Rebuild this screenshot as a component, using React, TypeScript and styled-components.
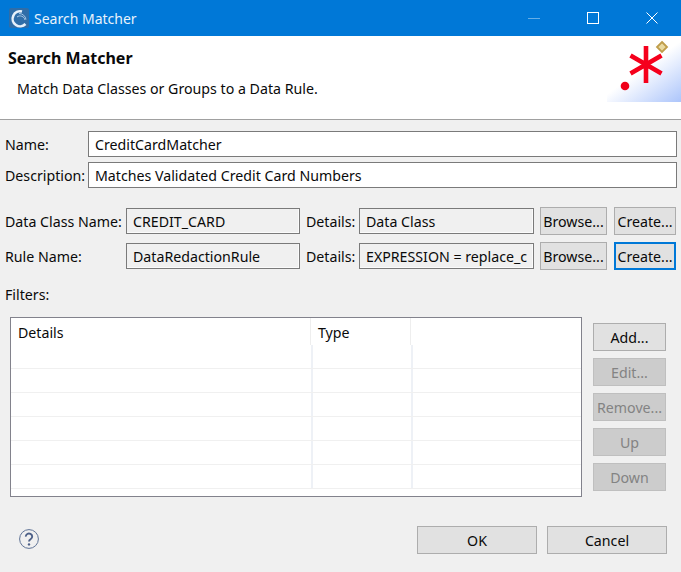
import styled, { createGlobalStyle } from "styled-components";

const GlobalStyle = createGlobalStyle`
  html, body {
    margin: 0;
    padding: 0;
    background: #f0f0f0;
  }
`;

const RULE_ROWS = [
  { label: "Data Class Name:", value: "CREDIT_CARD", details: "Data Class", focused: false },
  { label: "Rule Name:", value: "DataRedactionRule", details: "EXPRESSION = replace_c", focused: true },
];

const SIDE_BUTTONS = [
  { label: "Add...", disabled: false },
  { label: "Edit...", disabled: true },
  { label: "Remove...", disabled: true },
  { label: "Up", disabled: true },
  { label: "Down", disabled: true },
];

export default function App() {
  return (
    <Dialog>
      <GlobalStyle />
      <TitleBar>
        <AppIcon viewBox="0 0 20 20">
          <rect width="20" height="20" rx="2" fill="#2f6da8" />
          <path d="M13 3.5a7.5 7.5 0 1 0 3.5 12.5" fill="none" stroke="#e6f0fa" strokeWidth="2.6" />
          <path d="M8 9a5 5 0 0 1 8 3M10 5.5a7 7 0 0 1 7 6" fill="none" stroke="#a9c8e6" strokeWidth="1" />
        </AppIcon>
        <WindowTitle>Search Matcher</WindowTitle>
        <WindowControls>
          <WindowButton viewBox="0 0 12 12">
            <path d="M0 6.5H12" stroke="#66aee7" />
          </WindowButton>
          <WindowButton viewBox="0 0 12 12">
            <rect x="0.5" y="0.5" width="11" height="11" fill="none" stroke="#fff" />
          </WindowButton>
          <WindowButton viewBox="0 0 12 12">
            <path d="M0.5 0.5 11.5 11.5M11.5 0.5 0.5 11.5" stroke="#fff" />
          </WindowButton>
        </WindowControls>
      </TitleBar>

      <Banner>
        <BannerText>
          <BannerTitle>Search Matcher</BannerTitle>
          <BannerMessage>Match Data Classes or Groups to a Data Rule.</BannerMessage>
        </BannerText>
        <WizardImage viewBox="0 0 74 66">
          <defs>
            <linearGradient id="wizardFade" x1="0.35" y1="0.2" x2="1" y2="1">
              <stop offset="0.3" stopColor="#ffffff" />
              <stop offset="1" stopColor="#acc5fb" />
            </linearGradient>
          </defs>
          <rect width="74" height="66" fill="url(#wizardFade)" />
          <circle cx="18" cy="50" r="4.3" fill="#f00018" />
          <path d="M39 10v37M23.5 19.5l31 18M54.5 19.5l-31 18" stroke="#f5001c" strokeWidth="4.6" />
          <path d="M55 6 60 11 55 16 50 11Z" fill="#e9d9a0" stroke="#bf9d4a" strokeWidth="1.8" />
        </WizardImage>
      </Banner>

      <Body>
        <FieldRow>
          <FieldLabel>Name:</FieldLabel>
          <TextField>CreditCardMatcher</TextField>
        </FieldRow>
        <FieldRow>
          <FieldLabel>Description:</FieldLabel>
          <TextField>Matches Validated Credit Card Numbers</TextField>
        </FieldRow>

        <RuleGroup>
          {RULE_ROWS.map((row) => (
            <RuleRow key={row.label}>
              <RuleLabel>{row.label}</RuleLabel>
              <ReadOnlyField $width={174}>{row.value}</ReadOnlyField>
              <DetailsLabel>Details:</DetailsLabel>
              <ReadOnlyField $width={175}>{row.details}</ReadOnlyField>
              <BrowseButton>Browse...</BrowseButton>
              <CreateButton $focused={row.focused}>Create...</CreateButton>
            </RuleRow>
          ))}
        </RuleGroup>

        <FiltersLabel>Filters:</FiltersLabel>

        <FiltersArea>
          <FiltersTable>
            <HeaderRow>
              <HeaderCell $width={300}>Details</HeaderCell>
              <HeaderCell $width={100}>Type</HeaderCell>
              <HeaderCell $width={0} />
            </HeaderRow>
            <TableBody>
              {[0, 1, 2, 3, 4, 5].map((i) => (
                <TableRow key={i}>
                  <BodyCell $width={302} />
                  <BodyCell $width={100} />
                  <BodyCell $width={0} />
                </TableRow>
              ))}
            </TableBody>
          </FiltersTable>
          <SideButtons>
            {SIDE_BUTTONS.map((button) => (
              <PushButton key={button.label} $disabled={button.disabled}>
                {button.label}
              </PushButton>
            ))}
          </SideButtons>
        </FiltersArea>

        <Footer>
          <HelpIcon viewBox="0 0 20 20">
            <circle cx="10" cy="10" r="9.4" fill="none" stroke="#5f7396" strokeWidth="1" />
            <path d="M6.8 7.6a3.2 3 0 1 1 5 2.4c-1.2.8-1.8 1.3-1.8 2.6" fill="none" stroke="#4d6088" strokeWidth="1.9" />
            <circle cx="10" cy="15.4" r="1.2" fill="#4d6088" />
          </HelpIcon>
          <FooterButtons>
            <DialogButton>OK</DialogButton>
            <DialogButton>Cancel</DialogButton>
          </FooterButtons>
        </Footer>
      </Body>
    </Dialog>
  );
}

const Dialog = styled.div`
  display: flex;
  flex-direction: column;
  width: 681px;
  height: 572px;
  overflow: hidden;
  background: #f0f0f0;
  color: #0a0a0a;
  font-family: "Noto Sans", "Open Sans", sans-serif;
  font-size: 14.2px;
`;

const TitleBar = styled.div`
  display: flex;
  align-items: center;
  flex: none;
  height: 36px;
  padding-left: 9px;
  background: #0078d7;
`;

const AppIcon = styled.svg`
  width: 20px;
  height: 20px;
`;

const WindowTitle = styled.div`
  margin-left: 5px;
  color: #e8f2fb;
  font-size: 14px;
`;

const WindowControls = styled.div`
  display: flex;
  gap: 47px;
  margin-left: auto;
  margin-right: 23px;
`;

const WindowButton = styled.svg`
  width: 12px;
  height: 12px;
`;

const Banner = styled.div`
  display: flex;
  justify-content: space-between;
  align-items: flex-start;
  flex: none;
  height: 83px;
  background: #fff;
  border-bottom: 1px solid #a0a0a0;
`;

const BannerText = styled.div`
  padding: 10px 0 0 8px;
`;

const BannerTitle = styled.div`
  font-weight: 700;
  font-size: 16px;
  line-height: 24px;
`;

const BannerMessage = styled.div`
  margin: 6px 0 0 9px;
  line-height: 25px;
`;

const WizardImage = styled.svg`
  width: 74px;
  height: 66px;
`;

const Body = styled.div`
  display: flex;
  flex-direction: column;
  flex: 1;
  padding: 11px 4px 18px 5px;
`;

const FieldRow = styled.div`
  display: flex;
  align-items: center;
  margin-bottom: 5px;
`;

const FieldLabel = styled.div`
  flex: none;
  width: 83px;
`;

const TextField = styled.div`
  flex: 1;
  box-sizing: border-box;
  height: 26px;
  padding: 0 6px;
  line-height: 25px;
  background: #fff;
  border: 1px solid #7a7a7a;
`;

const RuleGroup = styled.div`
  display: flex;
  flex-direction: column;
  gap: 7px;
  margin-top: 14px;
`;

const RuleRow = styled.div`
  display: flex;
  align-items: center;
  height: 28px;
`;

const RuleLabel = styled.div`
  flex: none;
  width: 121px;
`;

const DetailsLabel = styled.div`
  flex: none;
  width: 53px;
  margin-left: 6px;
`;

const ReadOnlyField = styled.div<{ $width: number }>`
  flex: none;
  box-sizing: border-box;
  width: ${(p) => p.$width}px;
  height: 26px;
  padding: 0 6px;
  overflow: hidden;
  white-space: nowrap;
  line-height: 25px;
  background: #f0f0f0;
  border: 1px solid #7a7a7a;
  box-shadow: inset -1px -1px 0 #fbfbfb;
`;

const PushButton = styled.div<{ $focused?: boolean; $disabled?: boolean }>`
  display: flex;
  align-items: center;
  justify-content: center;
  box-sizing: border-box;
  height: 28px;
  white-space: nowrap;
  color: ${(p) => (p.$disabled ? "#838383" : "#0a0a0a")};
  background: ${(p) => (p.$disabled ? "#cccccc" : "#e1e1e1")};
  border: ${(p) => (p.$focused ? "2px solid #0078d7" : "1px solid #adadad")};
  ${(p) => p.$disabled && "border-color: #bfbfbf;"}
`;

const BrowseButton = styled(PushButton)`
  flex: none;
  width: 67px;
  margin-left: 6px;
`;

const CreateButton = styled(PushButton)`
  flex: none;
  width: 62px;
  margin-left: 7px;
`;

const FiltersLabel = styled.div`
  margin-top: 15px;
  line-height: 20px;
`;

const FiltersArea = styled.div`
  display: flex;
  align-items: flex-start;
  margin-top: 12px;
  padding-left: 5px;
`;

const FiltersTable = styled.div`
  display: flex;
  flex-direction: column;
  box-sizing: border-box;
  width: 572px;
  height: 180px;
  overflow: hidden;
  background: #fff;
  border: 1px solid #82828c;
`;

const HeaderRow = styled.div`
  display: flex;
  flex: none;
  height: 27px;
`;

const HeaderCell = styled.div<{ $width: number }>`
  box-sizing: border-box;
  width: ${(p) => p.$width || 100}px;
  flex: ${(p) => (p.$width ? "none" : 1)};
  padding: 0 7px;
  height: 27px;
  line-height: 29px;

  &:not(:last-child) {
    border-right: 1px solid #eeeeee;
  }
`;

const TableBody = styled.div`
  display: flex;
  flex-direction: column;
  height: 149px;
`;

const TableRow = styled.div`
  display: flex;
  flex: none;
  height: 24px;
  border-bottom: 1px solid #f0f0f0;
  box-sizing: border-box;
`;

const BodyCell = styled.div<{ $width: number }>`
  box-sizing: border-box;
  width: ${(p) => p.$width || 100}px;
  flex: ${(p) => (p.$width ? "none" : 1)};

  &:not(:last-child) {
    border-right: 2px solid #eef1f6;
  }
`;

const SideButtons = styled.div`
  display: flex;
  flex-direction: column;
  gap: 7px;
  flex: none;
  width: 73px;
  margin: 6px 0 0 11px;
`;

const Footer = styled.div`
  display: flex;
  align-items: center;
  justify-content: space-between;
  margin-top: 29px;
  padding: 0 10px 0 14px;
`;

const HelpIcon = styled.svg`
  width: 20px;
  height: 20px;
  margin-top: -2px;
`;

const FooterButtons = styled.div`
  display: flex;
  gap: 10px;
`;

const DialogButton = styled(PushButton)`
  width: 120px;
`;
